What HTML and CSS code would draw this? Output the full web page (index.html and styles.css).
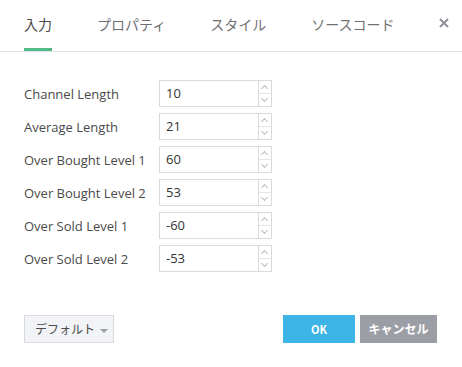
FILE: index.html
```html
<!DOCTYPE html>
<html lang="ja">
<head>
    <meta charset="UTF-8">
    <title>入力</title>
    <link rel="stylesheet" href="styles.css">
</head>
<body>
    <div class="dialog">
        <div class="tabs">
            <div class="tab active">入力</div>
            <div class="tab">プロパティ</div>
            <div class="tab">スタイル</div>
            <div class="tab">ソースコード</div>
            <div class="close">
                <svg width="10" height="10" viewBox="0 0 10 10"><path d="M1 1L9 9M9 1L1 9" stroke="#8f9299" stroke-width="2"/></svg>
            </div>
        </div>

        <div class="form">
            <div class="row"><label>Channel Length</label><div class="num"><span class="val">10</span><div class="spin"><i class="up"></i><i class="down"></i></div></div></div>
            <div class="row"><label>Average Length</label><div class="num"><span class="val">21</span><div class="spin"><i class="up"></i><i class="down"></i></div></div></div>
            <div class="row"><label>Over Bought Level 1</label><div class="num"><span class="val">60</span><div class="spin"><i class="up"></i><i class="down"></i></div></div></div>
            <div class="row"><label>Over Bought Level 2</label><div class="num"><span class="val">53</span><div class="spin"><i class="up"></i><i class="down"></i></div></div></div>
            <div class="row"><label>Over Sold Level 1</label><div class="num"><span class="val">-60</span><div class="spin"><i class="up"></i><i class="down"></i></div></div></div>
            <div class="row"><label>Over Sold Level 2</label><div class="num"><span class="val">-53</span><div class="spin"><i class="up"></i><i class="down"></i></div></div></div>
        </div>

        <div class="footer">
            <div class="default">デフォルト <span class="caret"></span></div>
            <div class="buttons">
                <div class="btn ok">OK</div>
                <div class="btn cancel">キャンセル</div>
            </div>
        </div>
    </div>
</body>
</html>
```

FILE: styles.css
```css
body {
    margin: 0;
    background: #fff;
    font-family: "Open Sans", "Noto Sans CJK JP", sans-serif;
    color: #4a4a4a;
}

.dialog {
    width: 462px;
    height: 367px;
}

.tabs {
    display: flex;
    height: 51px;
    padding-left: 24px;
    padding-right: 21px;
    border-bottom: 1px solid #e0e3e8;
}

.tab {
    flex-shrink: 0;
    white-space: nowrap;
    font-family: "Noto Sans CJK JP", sans-serif;
    font-size: 14px;
    color: #6f7073;
    line-height: 48px;
    height: 48px;
    margin-right: 45px;
    border-bottom: 3px solid transparent;
}

.tab.active {
    color: #4a4a4a;
    border-bottom-color: #53b987;
}

.tab:nth-child(2) {
    margin-right: 44px;
}

.close {
    margin-left: auto;
    padding-top: 18px;
}

.close svg {
    display: block;
}

.form {
    padding: 28px 0 0 24px;
    display: flex;
    flex-direction: column;
    gap: 6px;
}

.row {
    display: flex;
    align-items: center;
    height: 27px;
}

.row label {
    width: 135px;
    font-size: 13px;
    color: #4a4a4a;
}

.num {
    display: flex;
    width: 113px;
    height: 27px;
    box-sizing: border-box;
    border: 1px solid #d8dade;
}

.val {
    flex: 1;
    padding-left: 6px;
    font-size: 13px;
    line-height: 25px;
    color: #333;
}

.spin {
    width: 12px;
    border-left: 1px solid #d8dade;
    display: flex;
    flex-direction: column;
}

.spin i {
    flex: 1;
    position: relative;
}

.spin i.up {
    border-bottom: 1px solid #e3e5e8;
}

.spin i::after {
    content: "";
    position: absolute;
    left: 3px;
    width: 4px;
    height: 4px;
    border-left: 1px solid #b9bcc2;
    border-top: 1px solid #b9bcc2;
}

.spin i.up::after {
    top: 5px;
    transform: rotate(45deg);
}

.spin i.down::after {
    top: 2px;
    transform: rotate(225deg);
}

.footer {
    display: flex;
    justify-content: space-between;
    padding: 43px 25px 0 24px;
}

.default {
    width: 90px;
    height: 28px;
    box-sizing: border-box;
    border: 1px solid #d8dade;
    background: #f2f3f6;
    font-family: "Noto Sans CJK JP", sans-serif;
    font-size: 12px;
    line-height: 26px;
    color: #4a4a4a;
    padding-left: 10px;
}

.caret {
    display: inline-block;
    width: 0;
    height: 0;
    margin-left: 2px;
    border-left: 4px solid transparent;
    border-right: 4px solid transparent;
    border-top: 4px solid #9a9ca3;
    vertical-align: middle;
}

.buttons {
    display: flex;
    gap: 5px;
}

.btn {
    height: 28px;
    line-height: 28px;
    text-align: center;
    color: #fff;
    font-weight: bold;
    font-family: "Noto Sans CJK JP", sans-serif;
}

.ok {
    width: 72px;
    background: #3cb4e6;
    font-size: 11px;
}

.cancel {
    width: 77px;
    background: #9c9ea6;
    font-size: 12px;
}
```
